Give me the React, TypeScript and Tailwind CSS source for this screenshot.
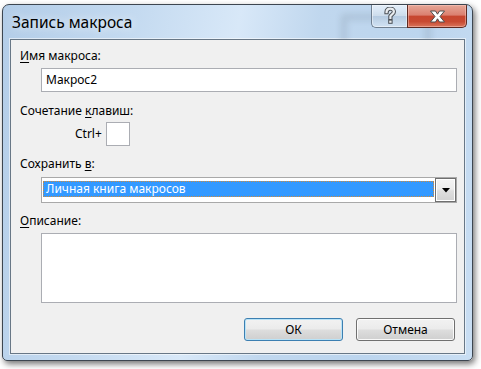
import React from "react";

function HelpGlyph() {
  return (
    <svg width="14" height="18" viewBox="0 0 14 18">
      <path d="M3.5 5.2C3.5 2.9 5.1 1.6 7.2 1.6C9.4 1.6 10.9 2.9 10.9 4.8C10.9 6.9 8.3 7.4 7.4 9.2L7.4 11" fill="none" stroke="#4a4f55" strokeWidth="4.2" strokeLinecap="square" />
      <rect x="5.2" y="12.6" width="4.4" height="4.2" fill="#4a4f55" />
      <path d="M3.5 5.2C3.5 2.9 5.1 1.6 7.2 1.6C9.4 1.6 10.9 2.9 10.9 4.8C10.9 6.9 8.3 7.4 7.4 9.2L7.4 11" fill="none" stroke="#e9ecef" strokeWidth="2.2" strokeLinecap="square" />
      <rect x="6.2" y="13.6" width="2.4" height="2.2" fill="#e9ecef" />
    </svg>
  );
}

function CloseGlyph() {
  return (
    <svg width="17" height="13" viewBox="0 0 17 13">
      <polygon
        points="1.5,1 6.5,1 8.5,4.2 10.5,1 15.5,1 11,6.5 15.5,12 10.5,12 8.5,8.8 6.5,12 1.5,12 6,6.5"
        fill="#ffffff"
        stroke="#4d4d4d"
        strokeWidth="1"
        strokeLinejoin="round"
      />
    </svg>
  );
}

function WinButton({ label, primary }: { label: string; primary?: boolean }) {
  return (
    <div
      className={
        "w-[99px] h-[23px] rounded-[3px] border flex items-center justify-center text-black bg-[linear-gradient(to_bottom,#f2f2f2_0%,#ebebeb_48%,#dddddd_52%,#cfcfcf_100%)] " +
        (primary
          ? "border-[#3c7fb1] shadow-[inset_0_0_0_1px_#b9e3f7]"
          : "border-[#707070] shadow-[inset_0_0_0_1px_rgba(255,255,255,0.85)]")
      }
    >
      {label}
    </div>
  );
}

export default function App() {
  return (
    <div className="w-[481px] h-[369px] bg-white overflow-hidden font-['Noto_Sans',sans-serif] text-black">
      <div className="ml-[2px] mt-[4px] w-[471px] h-[357px] flex flex-col rounded-t-[7px] rounded-b-[5px] border border-[#3d4650] overflow-hidden relative shadow-[2px_3px_6px_rgba(0,0,0,0.55)] bg-[linear-gradient(100deg,#b3cde8_0%,#c4daf0_25%,#d8e8f8_45%,#c0d7ee_60%,#bcd5ee_80%,#c9def3_100%)]">
        {/* title bar */}
        <div className="h-[34px] flex items-start relative overflow-hidden">
          <div className="absolute left-[338px] top-[9px] w-[90px] h-[44px] rounded-[3px] border-[6px] border-[#5d6b78] opacity-[0.18] blur-[3px]" />
          <span className="ml-[9px] mt-[7px] text-[15.5px] leading-[20px] text-black [text-shadow:0_0_8px_rgba(255,255,255,0.9)] relative">
            Запись макроса
          </span>
          <div className="ml-auto mr-[5px] flex relative">
            <div className="w-[36px] h-[23px] rounded-bl-[5px] border border-t-0 border-r-0 border-[#6f7f90] flex items-center justify-center bg-[linear-gradient(to_bottom,rgba(255,255,255,0.55)_0%,rgba(255,255,255,0.35)_48%,rgba(190,208,226,0.35)_52%,rgba(220,232,244,0.6)_100%)] shadow-[inset_0_0_0_1px_rgba(255,255,255,0.45)]">
              <HelpGlyph />
            </div>
            <div className="w-[60px] h-[23px] rounded-br-[5px] border border-t-0 border-[#5e2a22] flex items-center justify-center bg-[linear-gradient(to_bottom,#e6a797_0%,#db8070_45%,#c7462f_52%,#c84a32_75%,#d9755c_100%)] shadow-[inset_0_0_0_1px_rgba(255,210,200,0.45)]">
              <CloseGlyph />
            </div>
          </div>
        </div>
        {/* client area */}
        <div className="mx-[7px] mb-[6px] flex-1 border border-[#687786] bg-[#f0f0f0] shadow-[0_0_0_1px_rgba(255,255,255,0.55)] flex flex-col pl-[9px] pr-[9px] pt-[8px] text-[12px] leading-[16px]">
          <div>
            <span className="underline underline-offset-[2px]">И</span>мя макроса:
          </div>
          <div className="mt-[4px] ml-[21px] w-[416px] h-[24px] border border-[#abadb3] bg-white pl-[4px] flex items-center">
            Макрос2
          </div>
          <div className="mt-[11px]">
            Сочетание <span className="underline underline-offset-[2px]">к</span>лавиш:
          </div>
          <div className="mt-[3px] ml-[55px] flex items-center gap-[4px]">
            <span>Ctrl+</span>
            <div className="w-[24px] h-[24px] border border-[#abadb3] bg-white" />
          </div>
          <div className="mt-[10px]">
            Сохранить <span className="underline underline-offset-[2px]">в</span>:
          </div>
          <div className="mt-[5px] ml-[21px] w-[416px] h-[26px] border border-[#a9a9a9] bg-white flex items-start">
            <div className="mt-[3px] ml-[1px] w-[391px] h-[16px] bg-[#3399ff] border border-dotted border-[#d08a3a] text-white flex items-center pl-[2px] leading-[14px]">
              Личная книга макросов
            </div>
            <div className="ml-auto w-[21px] h-[24px] border border-[#6f6f6f] shadow-[inset_0_0_0_1px_#ffffff] bg-[linear-gradient(to_bottom,#f4f4f4_0%,#ececec_45%,#dedede_55%,#d2d2d2_100%)] flex items-center justify-center">
              <svg width="8" height="5" viewBox="0 0 8 5">
                <polygon points="0,0 8,0 4,4.5" fill="#000" />
              </svg>
            </div>
          </div>
          <div className="mt-[10px]">
            <span className="underline underline-offset-[2px]">О</span>писание:
          </div>
          <div className="mt-[4px] ml-[21px] w-[416px] h-[70px] border border-[#abadb3] bg-white" />
          <div className="mt-[15px] flex justify-end gap-[13px]">
            <WinButton label="ОК" primary />
            <WinButton label="Отмена" />
          </div>
        </div>
      </div>
    </div>
  );
}
